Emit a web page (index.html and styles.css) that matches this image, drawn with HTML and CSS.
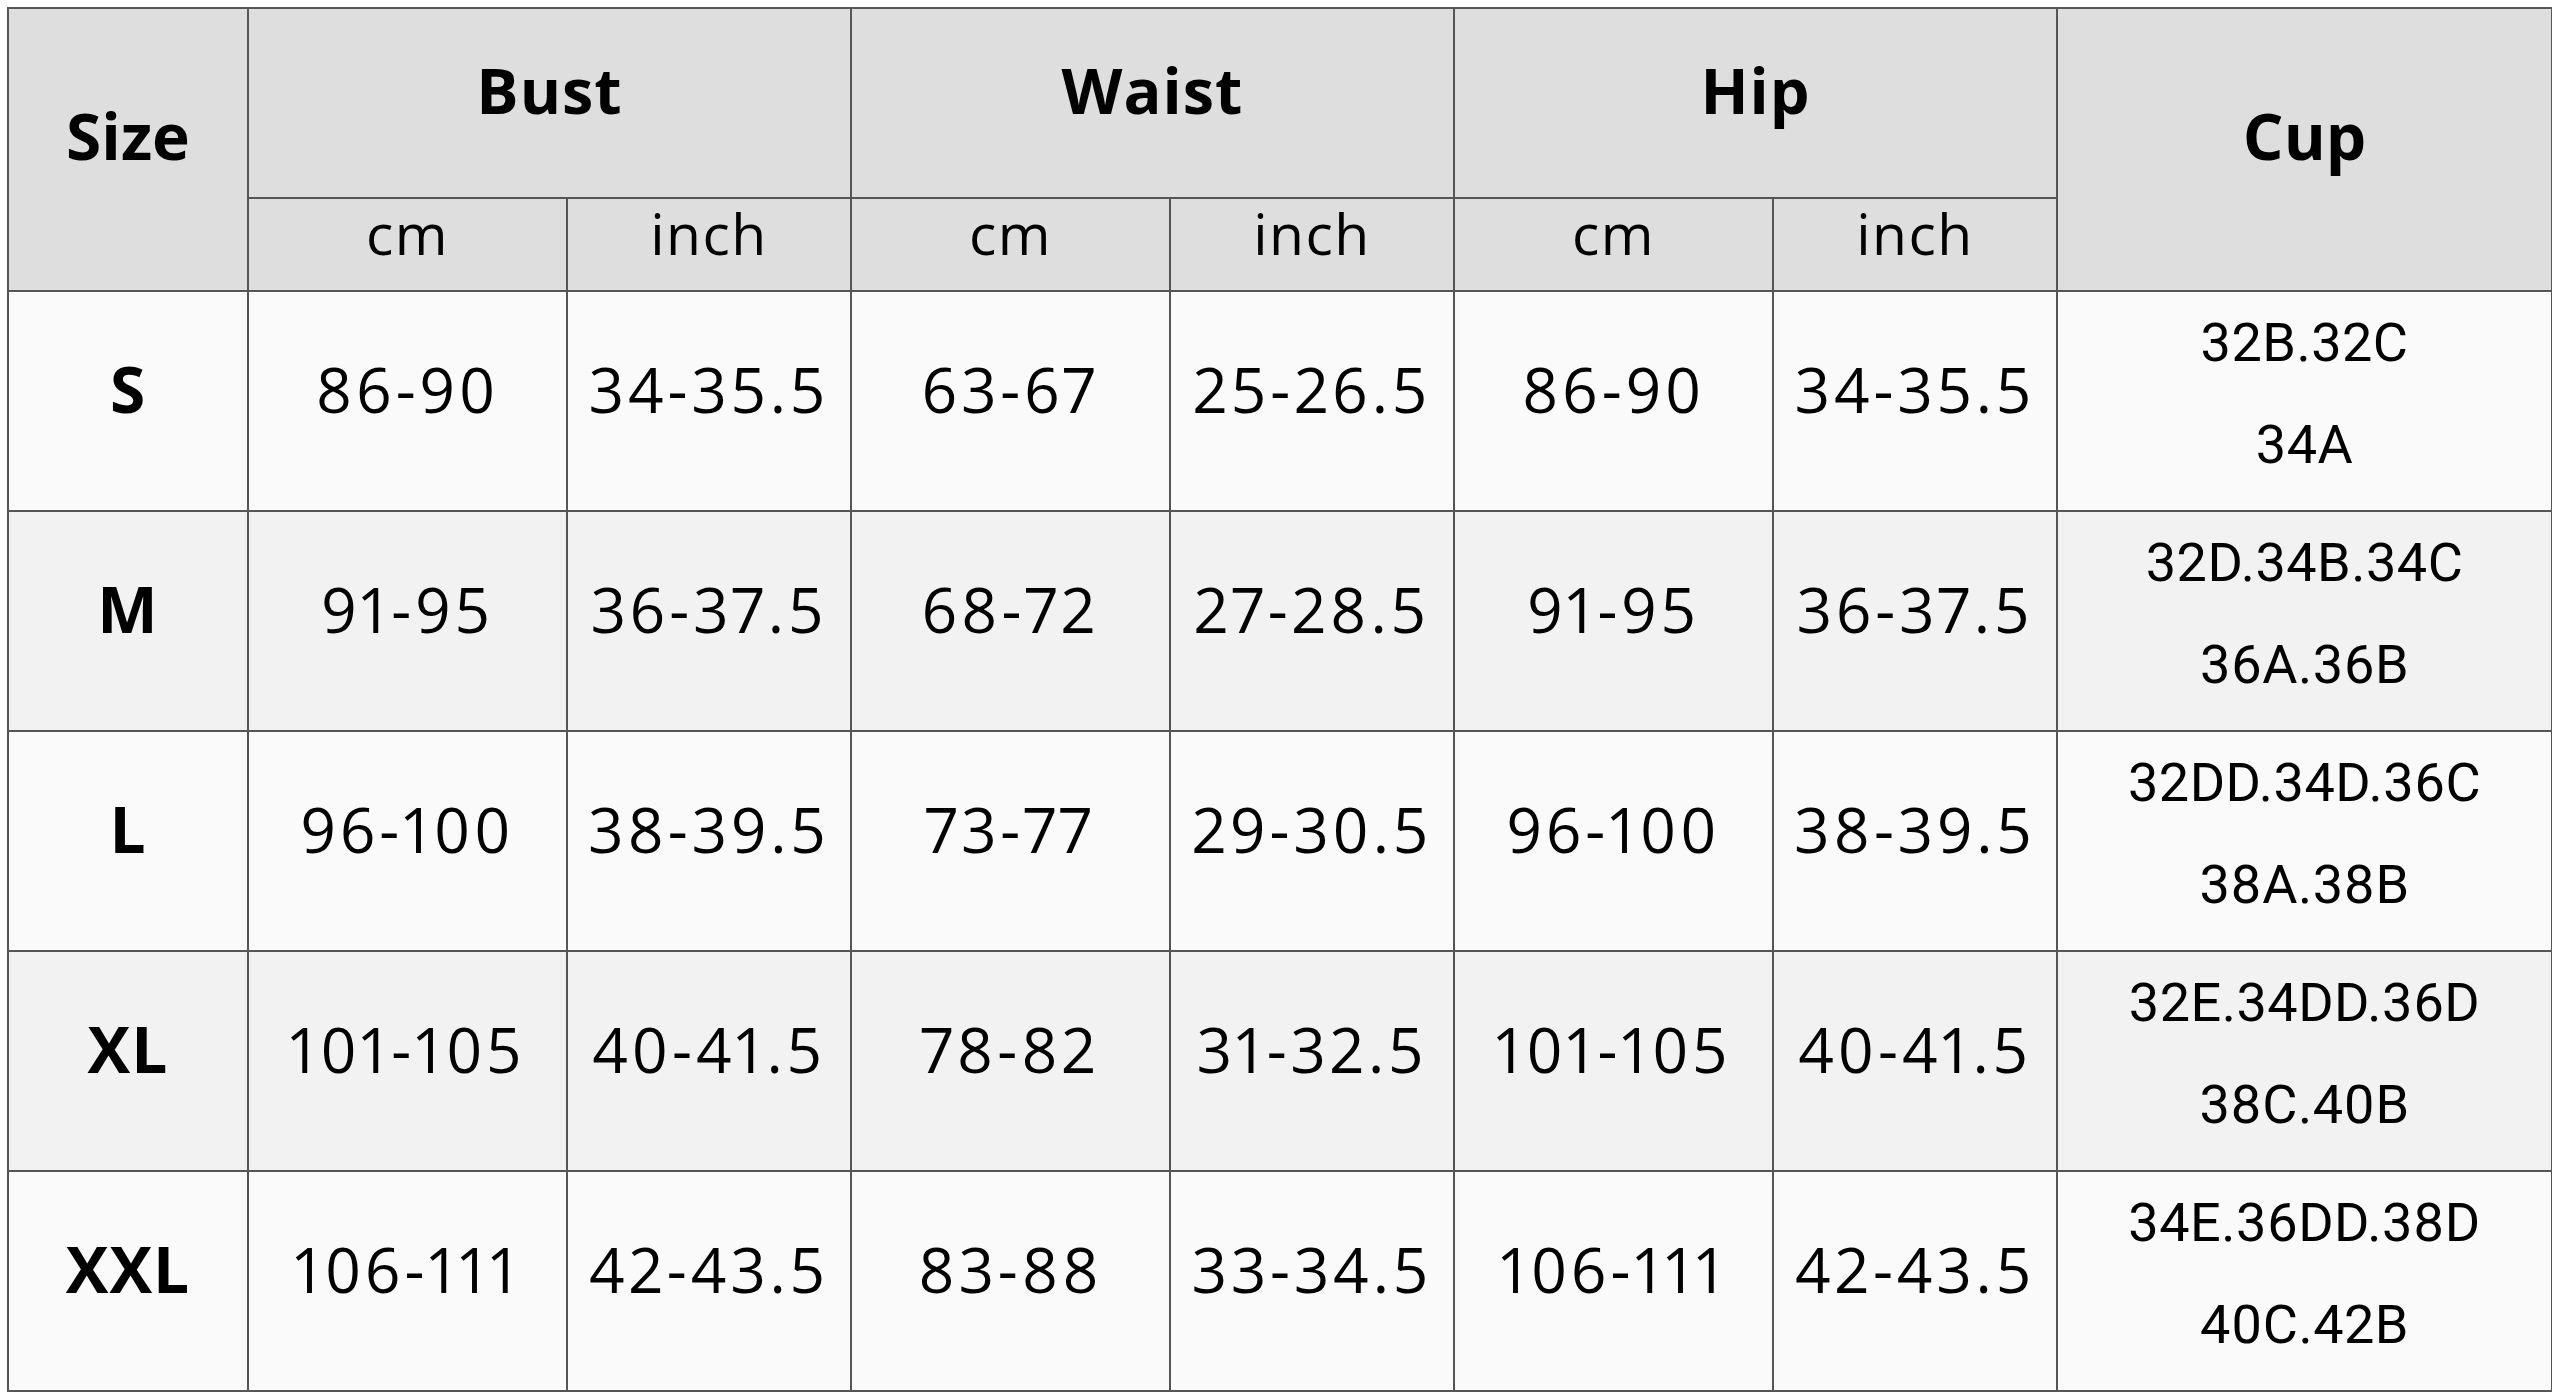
FILE: index.html
```html
<!DOCTYPE html>
<html lang="en">
<head>
<meta charset="utf-8">
<title>Size Chart</title>
<link rel="stylesheet" href="styles.css">
</head>
<body>
<table class="chart">
  <colgroup>
    <col class="c-size">
    <col class="c-cm">
    <col class="c-in">
    <col class="c-cm">
    <col class="c-in">
    <col class="c-cm">
    <col class="c-in">
    <col class="c-cup">
  </colgroup>
  <thead>
    <tr class="h1">
      <th rowspan="2" class="big">Size</th>
      <th colspan="2" class="group">Bust</th>
      <th colspan="2" class="group">Waist</th>
      <th colspan="2" class="group">Hip</th>
      <th rowspan="2" class="big">Cup</th>
    </tr>
    <tr class="h2">
      <th class="unit">cm</th><th class="unit">inch</th>
      <th class="unit">cm</th><th class="unit">inch</th>
      <th class="unit">cm</th><th class="unit">inch</th>
    </tr>
  </thead>
  <tbody>
    <tr class="odd">
      <td class="size">S</td><td>86-90</td><td>34-35.5</td><td>63-67</td><td>25-26.5</td><td>86-90</td><td>34-35.5</td>
      <td class="cup"><div>32B.32C</div><div>34A</div></td>
    </tr>
    <tr class="even">
      <td class="size">M</td><td>91-95</td><td>36-37.5</td><td>68-72</td><td>27-28.5</td><td>91-95</td><td>36-37.5</td>
      <td class="cup"><div>32D.34B.34C</div><div>36A.36B</div></td>
    </tr>
    <tr class="odd">
      <td class="size">L</td><td>96-100</td><td>38-39.5</td><td>73-77</td><td>29-30.5</td><td>96-100</td><td>38-39.5</td>
      <td class="cup"><div>32DD.34D.36C</div><div>38A.38B</div></td>
    </tr>
    <tr class="even">
      <td class="size">XL</td><td>101-105</td><td>40-41.5</td><td>78-82</td><td>31-32.5</td><td>101-105</td><td>40-41.5</td>
      <td class="cup"><div>32E.34DD.36D</div><div>38C.40B</div></td>
    </tr>
    <tr class="odd">
      <td class="size">XXL</td><td>106-111</td><td>42-43.5</td><td>83-88</td><td>33-34.5</td><td>106-111</td><td>42-43.5</td>
      <td class="cup"><div>34E.36DD.38D</div><div>40C.42B</div></td>
    </tr>
  </tbody>
</table>
</body>
</html>
```
FILE: styles.css
```css
html, body {
  background: #ffffff;
}
body {
  margin: 7px 8px 8px 7px;
  font-family: "Open Sans", "Liberation Sans", sans-serif;
  color: #000;
}
.chart {
  border-collapse: collapse;
  table-layout: fixed;
  width: 2545px;
  height: 1384px;
  border: 2px solid #555;
}
.c-size { width: 240px; }
.c-cm { width: 319px; }
.c-in { width: 284px; }
.c-cup { width: 495px; }

.chart th, .chart td {
  border: 2px solid #555;
  text-align: center;
  vertical-align: middle;
  padding: 0 0 24px 0;
  line-height: 1;
}
.chart thead th {
  background: #dedede;
}
.h1 { height: 190px; }
.h2 { height: 93px; }
.chart tbody tr { height: 220px; }

.big {
  font-size: 64px;
  font-weight: 700;
}
.chart th.big { padding-bottom: 28px; }
.group {
  font-size: 63px;
  font-weight: 700;
  letter-spacing: 1px;
}
.chart th.group { padding-bottom: 28px; }
.unit {
  font-size: 57px;
  font-weight: 400;
  letter-spacing: 1.5px;
}
.chart th.unit { padding-bottom: 22px; }
.odd td { background: #fafafa; }
.even td { background: #f2f2f2; }

.chart td {
  font-size: 62px;
  font-weight: 500;
  letter-spacing: 4px;
  font-variant-numeric: proportional-nums;
}
.chart td.size {
  font-size: 64px;
  font-weight: 700;
  letter-spacing: 1px;
}
.chart td.cup {
  font-family: Roboto, "Liberation Sans", sans-serif;
  font-size: 54px;
  font-weight: 400;
  letter-spacing: 0.5px;
  padding-bottom: 14px;
}
.cup div {
  line-height: 102px;
}
```
